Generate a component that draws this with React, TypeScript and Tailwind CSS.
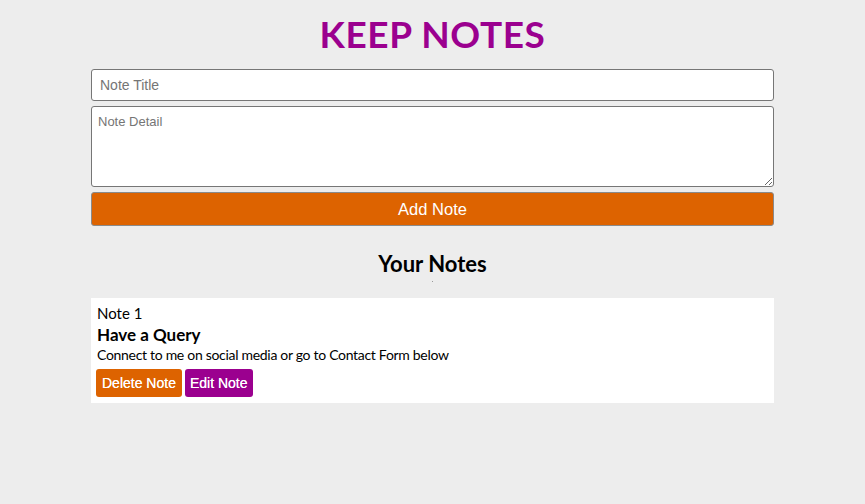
export default function App() {
  const gill = { fontFamily: "Lato, 'Open Sans', sans-serif" };
  return (
    <div className="min-h-[504px] bg-[#ededed] pt-[15px]" style={gill}>
      <h1 className="text-center text-[37px] leading-[38px] font-bold text-[#9b008f] tracking-[0.6px]">
        KEEP NOTES
      </h1>
      <div className="mx-[91px] mt-[16px] flex flex-col">
        <input
          placeholder="Note Title"
          className="h-[32px] rounded-[3px] border border-[#767676] bg-white px-[8px] text-[14px] text-[#757575] placeholder:text-[#757575] outline-none"
          style={{ fontFamily: "'Liberation Sans', Arial, sans-serif" }}
        />
        <textarea
          placeholder="Note Detail"
          className="mt-[5px] h-[81px] rounded-[3px] border border-[#767676] bg-white px-[6px] py-[7px] text-[13px] leading-[16px] placeholder:text-[#757575] outline-none"
          style={{ fontFamily: "'Liberation Sans', Arial, sans-serif" }}
        />
        <button
          className="mt-[5px] h-[34px] rounded-[3px] border border-[#8a8a8a] bg-[#dd6300] text-[16.5px] text-white"
          style={{ fontFamily: "'Liberation Sans', Arial, sans-serif" }}
        >
          Add Note
        </button>
        <h2 className="mt-[24px] text-center text-[22px] leading-[28px] font-bold text-black">
          Your Notes
        </h2>
        <div className="mx-auto mt-[3px] h-[1px] w-[1px] bg-[#999]" />
        <div className="mt-[16px] bg-white px-[6px] pt-[6px] pb-[6px]">
          <div className="text-[15px] leading-[18px] text-black">Note 1</div>
          <div className="mt-[2px] text-[17px] leading-[22px] font-bold text-black">Have a Query</div>
          <div className="text-[14px] leading-[18px] tracking-[-0.3px] text-black">
            Connect to me on social media or go to Contact Form below
          </div>
          <div
            className="mt-[5px] -ml-[1px] flex gap-[3px] text-[14px] text-white"
            style={{ fontFamily: "'Liberation Sans', Arial, sans-serif" }}
          >
            <button className="h-[28px] rounded-[3px] bg-[#dd6300] px-[6px] [text-shadow:0_0_0.4px_white]">
              Delete Note
            </button>
            <button className="h-[28px] rounded-[3px] bg-[#9b008f] px-[5px] [text-shadow:0_0_0.4px_white]">
              Edit Note
            </button>
          </div>
        </div>
      </div>
    </div>
  );
}
